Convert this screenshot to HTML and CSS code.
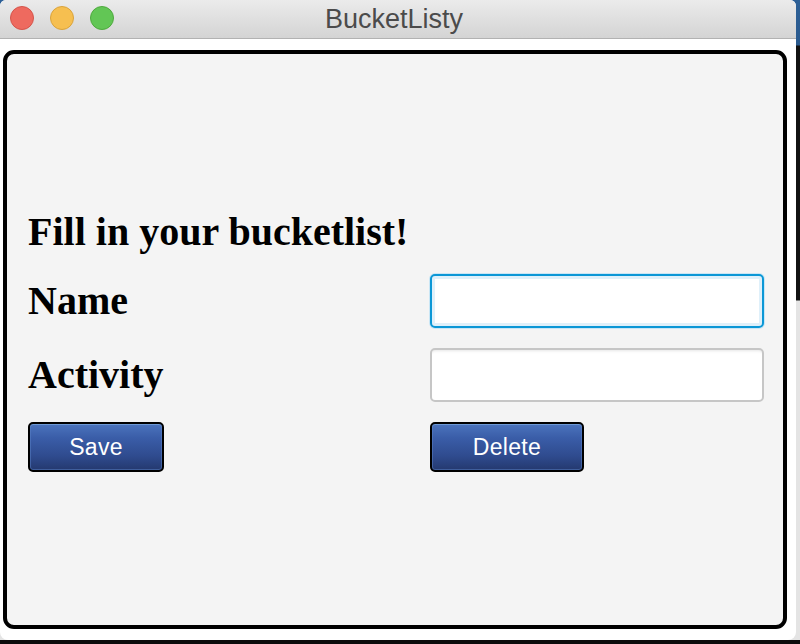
FILE: index.html
```html
<!DOCTYPE html>
<html>
<head>
<meta charset="utf-8">
<title>BucketListy</title>
<link rel="stylesheet" href="styles.css">
</head>
<body>
<div class="desktop">
  <div class="window">
    <div class="titlebar">
      <div class="lights">
        <span class="light red"></span>
        <span class="light yellow"></span>
        <span class="light green"></span>
      </div>
      <div class="title">BucketListy</div>
    </div>
    <div class="content">
      <div class="panel">
        <div class="form">
          <div class="heading">Fill in your bucketlist!</div>
          <div class="label">Name</div>
          <div class="field focused"></div>
          <div class="label">Activity</div>
          <div class="field"></div>
          <div class="btn-cell"><button class="btn btn-save">Save</button></div>
          <div class="btn-cell"><button class="btn btn-delete">Delete</button></div>
        </div>
      </div>
    </div>
  </div>
</div>
</body>
</html>
```

FILE: styles.css
```css
html, body {
  margin: 0;
  padding: 0;
}
body {
  width: 800px;
  height: 644px;
  overflow: hidden;
  background: linear-gradient(to bottom, #2d6097 0px, #2a5a8e 45px, #121212 46px, #121212 300px, #e4e4e4 301px, #e4e4e4 640px, #0c0c0c 640px);
}
.desktop {
  width: 800px;
  height: 644px;
}
.window {
  width: 796px;
  height: 640px;
  background: #ffffff;
  border-radius: 6px 6px 8px 8px;
  overflow: hidden;
  display: flex;
  flex-direction: column;
}
.titlebar {
  height: 38px;
  flex: none;
  background: linear-gradient(to bottom, #ebebeb, #d4d4d4);
  border-bottom: 1px solid #b2b2b2;
  position: relative;
  display: flex;
  align-items: center;
  justify-content: center;
}
.lights {
  position: absolute;
  left: 10px;
  top: 6px;
  display: flex;
  gap: 16px;
}
.light {
  width: 22px;
  height: 22px;
  border-radius: 50%;
  display: block;
}
.red { background: #ee6a5f; border: 1px solid #d4554b; }
.yellow { background: #f6bf50; border: 1px solid #d9a33c; }
.green { background: #62c655; border: 1px solid #4fa93e; }
.title {
  font-family: "Liberation Sans", Arial, sans-serif;
  font-size: 27px;
  color: #4b4b4b;
  margin-left: -8px;
  margin-top: 1px;
}
.content {
  flex: 1;
  padding: 11px 9px 11px 3px;
  display: flex;
}
.panel {
  flex: 1;
  background: #f4f4f4;
  border: 4px solid #000;
  border-radius: 11px;
  padding: 156px 0 0 21px;
}
.form {
  display: grid;
  grid-template-columns: 402px 334px;
  grid-template-rows: 44px 54px 54px 50px;
  row-gap: 20px;
}
.heading {
  grid-column: 1 / span 2;
  font-family: "Liberation Serif", "Times New Roman", serif;
  font-weight: bold;
  font-size: 40px;
  line-height: 44px;
  color: #000;
}
.label {
  font-family: "Liberation Serif", "Times New Roman", serif;
  font-weight: bold;
  font-size: 40px;
  line-height: 54px;
  color: #000;
}
.field {
  box-sizing: border-box;
  height: 54px;
  background: #fff;
  border: 2px solid #c6c6c6;
  border-radius: 5px;
  box-shadow: inset 0 4px 3px -3px rgba(0,0,0,0.10);
}
.field.focused {
  border: 2px solid #0b97d6;
  box-shadow: inset 0 0 0 3px #dff0fa, 0 0 0 1px #c9e6f5;
}
.btn-cell {
  display: flex;
  align-items: stretch;
}
.btn {
  height: 50px;
  box-sizing: border-box;
  padding: 0;
  border: 2px solid #000;
  border-radius: 5px;
  background: linear-gradient(to bottom, #4b74bd 0%, #3a5da8 30%, #2f4b8e 70%, #24396f 100%);
  box-shadow: inset 0 1px 0 #6e9ad6, inset 0 0 0 1px rgba(90,130,200,0.5);
  color: #fff;
  font-family: "Liberation Sans", Arial, sans-serif;
  font-size: 23px;
  letter-spacing: 0.3px;
  cursor: pointer;
}
.btn-save { width: 136px; }
.btn-delete { width: 154px; }
```
